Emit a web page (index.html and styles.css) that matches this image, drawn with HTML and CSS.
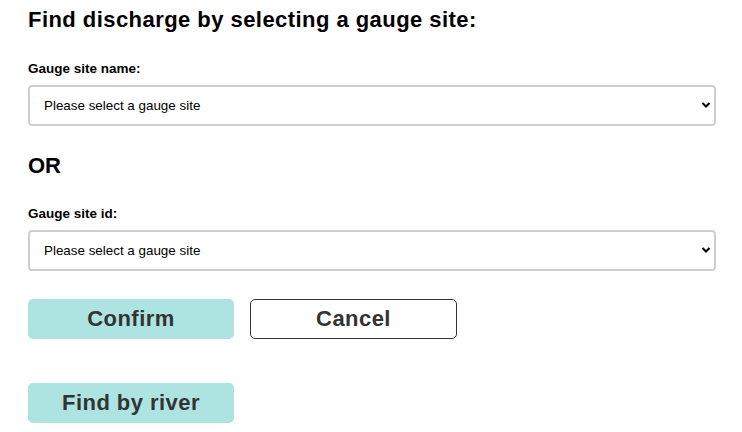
FILE: index.html
```html
<!DOCTYPE html>
<html>
<head>
<meta charset="utf-8">
<link rel="stylesheet" href="styles.css">
</head>
<body>
<main class="page">
  <h1 class="title">Find discharge by selecting a gauge site:</h1>
  <label class="label">Gauge site name:</label>
  <div class="select-wrap">
    <select class="select"><option>Please select a gauge site</option></select>
    <svg class="chev" width="10" height="8" viewBox="0 0 10 8"><path d="M1.5 2 L5 5.5 L8.5 2" fill="none" stroke="#000" stroke-width="2"/></svg>
  </div>
  <h2 class="or">OR</h2>
  <label class="label">Gauge site id:</label>
  <div class="select-wrap">
    <select class="select"><option>Please select a gauge site</option></select>
    <svg class="chev" width="10" height="8" viewBox="0 0 10 8"><path d="M1.5 2 L5 5.5 L8.5 2" fill="none" stroke="#000" stroke-width="2"/></svg>
  </div>
  <div class="actions">
    <button class="btn primary">Confirm</button>
    <button class="btn outline">Cancel</button>
  </div>
  <div class="actions second">
    <button class="btn primary">Find by river</button>
  </div>
</main>
</body>
</html>
```
FILE: styles.css
```css
* { box-sizing: border-box; }
body {
  margin: 0;
  font-family: "Liberation Sans", Arial, sans-serif;
  background: #fff;
  color: #000;
}
.page {
  padding: 0 26px 0 28px;
  display: flex;
  flex-direction: column;
}
.title {
  margin: 6px 0 0;
  font-size: 22px;
  line-height: 28px;
  font-weight: bold;
  letter-spacing: 0.45px;
}
.label {
  display: block;
  margin-top: 28px;
  font-size: 13.5px;
  line-height: 14px;
  font-weight: bold;
}
.select-wrap {
  position: relative;
  margin-top: 9px;
}
.select {
  appearance: none;
  -webkit-appearance: none;
  width: 100%;
  height: 41px;
  border: 2px solid #cfcfcf;
  border-radius: 4px;
  background: #fff;
  padding: 0 14px;
  font-family: "Liberation Sans", Arial, sans-serif;
  font-size: 13.4px;
  color: #000;
}
.chev {
  position: absolute;
  right: 5px;
  top: 16px;
}
.or {
  margin: 27px 0 0;
  font-size: 22px;
  line-height: 26px;
  font-weight: bold;
}
.actions {
  display: flex;
  gap: 16px;
  margin-top: 28px;
}
.actions.second { margin-top: 44px; }
.btn {
  width: 206px;
  height: 40px;
  border-radius: 5px;
  font-family: "Liberation Sans", Arial, sans-serif;
  font-size: 22px;
  font-weight: bold;
  color: #333;
  padding: 0;
  letter-spacing: 0.45px;
}
.primary {
  background: #ade3e0;
  border: none;
}
.outline {
  width: 207px;
  background: #fff;
  border: 1px solid #333;
}
```
